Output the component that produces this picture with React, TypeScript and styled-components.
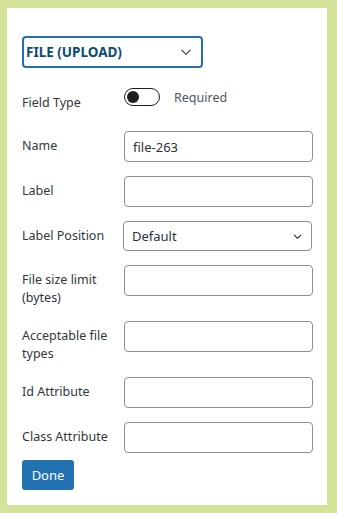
import React from 'react';
import styled, { createGlobalStyle } from 'styled-components';

const GlobalStyle = createGlobalStyle`
  html, body {
    margin: 0;
    padding: 0;
    background: #d4e39a;
  }
  * {
    box-sizing: border-box;
  }
`

const Frame = styled.div`
  width: 337px;
  height: 513px;
  padding: 8px 10px 8px 7px;
  background: #d4e39a;
  font-family: "Noto Sans", "Open Sans", sans-serif;
`

const Panel = styled.div`
  background: #fff;
  height: 100%;
  padding: 28px 14px 0 15px;
`

const TypeSelect = styled.div`
  width: 181px;
  height: 32px;
  border: 2px solid #2271b1;
  border-radius: 4px;
  display: flex;
  align-items: center;
  justify-content: space-between;
  padding: 0 8px 0 2px;
  color: #0a4b78;
  font-size: 13.5px;
  font-weight: 700;
`

const Form = styled.div`
  display: flex;
  flex-direction: column;
  gap: 14px;
`

const Row = styled.div<{ $toggle?: boolean }>`
  display: flex;
  align-items: flex-start;
  margin: ${p => (p.$toggle ? '20px 0 5px' : '0')};
`

const Label = styled.label`
  width: 102px;
  flex-shrink: 0;
  padding: 6px 8px 0 0;
  font-size: 12.5px;
  line-height: 18px;
  color: #32373c;
`

const Input = styled.input`
  width: 189px;
  height: 31px;
  border: 1px solid #8c8f94;
  border-radius: 4px;
  padding: 0 8px;
  font-family: inherit;
  font-size: 13px;
  color: #2c3338;
  background: #fff;
  outline: none;
`

const Select = styled.div`
  width: 189px;
  height: 30px;
  margin-left: -1px;
  border: 1px solid #8c8f94;
  border-radius: 4px;
  padding: 0 8px;
  display: flex;
  align-items: center;
  justify-content: space-between;
  font-size: 13px;
  color: #2c3338;
`

const ToggleWrap = styled.div`
  display: flex;
  align-items: center;
  gap: 14px;
`

const Switch = styled.span<{ $on?: boolean }>`
  width: 36px;
  height: 18px;
  border: 1.5px solid #1e1e1e;
  border-radius: 9px;
  display: flex;
  align-items: center;
  padding: 0 2px;
  justify-content: ${p => (p.$on ? 'flex-end' : 'flex-start')};
`

const Knob = styled.span`
  width: 12px;
  height: 12px;
  border-radius: 50%;
  background: #1e1e1e;
`

const ToggleText = styled.span`
  font-size: 12.5px;
  color: #50575e;
`

const DoneButton = styled.button`
  margin-top: 7px;
  width: 52px;
  height: 30px;
  border: none;
  border-radius: 3px;
  background: #2271b1;
  color: #fff;
  font-family: inherit;
  font-size: 13px;
  padding: 0 0 1px;
`

const Chevron = ({ size, color }: { size: number; color: string }) => (
  <svg width={size} height={size} viewBox="0 0 24 24" fill="none">
    <path d="M5 9l7 7 7-7" stroke={color} strokeWidth="2.2" strokeLinecap="round" strokeLinejoin="round" />
  </svg>
)

type Field = { label: string; value?: string }

const fields: Field[] = [
  { label: 'Name', value: 'file-263' },
  { label: 'Label' },
]

const moreFields: Field[] = [
  { label: 'File size limit (bytes)' },
  { label: 'Acceptable file types' },
  { label: 'Id Attribute' },
  { label: 'Class Attribute' },
]

export default function App() {
  return (
    <>
      <GlobalStyle />
      <Frame>
        <Panel>
          <TypeSelect>
            <span>FILE (UPLOAD)</span>
            <Chevron size={14} color="#50575e" />
          </TypeSelect>
          <Form>
            <Row $toggle>
              <Label>Field Type</Label>
              <ToggleWrap>
                <Switch>
                  <Knob />
                </Switch>
                <ToggleText>Required</ToggleText>
              </ToggleWrap>
            </Row>
            {fields.map(f => (
              <Row key={f.label}>
                <Label>{f.label}</Label>
                <Input defaultValue={f.value ?? ''} />
              </Row>
            ))}
            <Row>
              <Label>Label Position</Label>
              <Select>
                <span>Default</span>
                <Chevron size={11} color="#1e1e1e" />
              </Select>
            </Row>
            {moreFields.map(f => (
              <Row key={f.label}>
                <Label>{f.label}</Label>
                <Input defaultValue={f.value ?? ''} />
              </Row>
            ))}
          </Form>
          <DoneButton>Done</DoneButton>
        </Panel>
      </Frame>
    </>
  );
}
